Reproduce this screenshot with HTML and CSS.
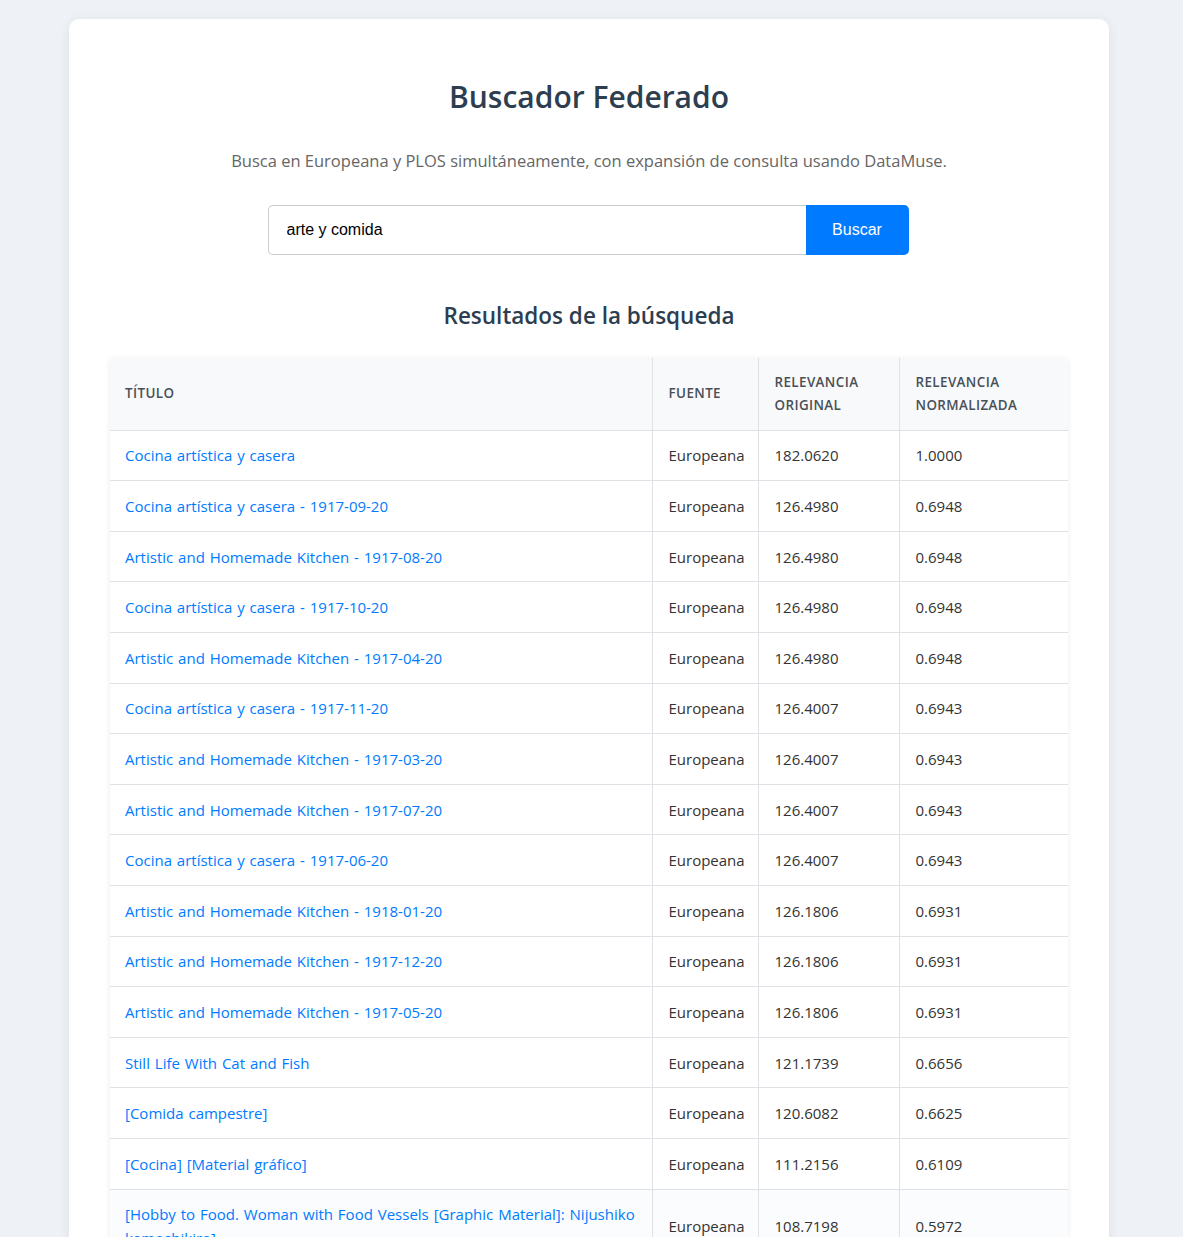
FILE: index.html
```html
<!DOCTYPE html>
<html lang="es">
<head>
<meta charset="utf-8">
<title>Buscador Federado</title>
<link rel="stylesheet" href="styles.css">
</head>
<body>
<main class="card">
  <h1 class="title">Buscador Federado</h1>
  <p class="subtitle">Busca en Europeana y PLOS simultáneamente, con expansión de consulta usando DataMuse.</p>
  <form class="search">
    <input class="search-input" type="text" value="arte y comida">
    <button class="search-btn" type="button">Buscar</button>
  </form>
  <h2 class="results-title">Resultados de la búsqueda</h2>
  <div class="table-wrap">
    <table class="results">
      <colgroup>
        <col class="c-title"><col class="c-src"><col class="c-orig"><col class="c-norm">
      </colgroup>
      <thead>
        <tr><th>Título</th><th>Fuente</th><th>Relevancia Original</th><th>Relevancia Normalizada</th></tr>
      </thead>
      <tbody>
        <tr><td><a href="#">Cocina artística y casera</a></td><td>Europeana</td><td>182.0620</td><td>1.0000</td></tr>
        <tr><td><a href="#">Cocina artística y casera - 1917-09-20</a></td><td>Europeana</td><td>126.4980</td><td>0.6948</td></tr>
        <tr><td><a href="#">Artistic and Homemade Kitchen - 1917-08-20</a></td><td>Europeana</td><td>126.4980</td><td>0.6948</td></tr>
        <tr><td><a href="#">Cocina artística y casera - 1917-10-20</a></td><td>Europeana</td><td>126.4980</td><td>0.6948</td></tr>
        <tr><td><a href="#">Artistic and Homemade Kitchen - 1917-04-20</a></td><td>Europeana</td><td>126.4980</td><td>0.6948</td></tr>
        <tr><td><a href="#">Cocina artística y casera - 1917-11-20</a></td><td>Europeana</td><td>126.4007</td><td>0.6943</td></tr>
        <tr><td><a href="#">Artistic and Homemade Kitchen - 1917-03-20</a></td><td>Europeana</td><td>126.4007</td><td>0.6943</td></tr>
        <tr><td><a href="#">Artistic and Homemade Kitchen - 1917-07-20</a></td><td>Europeana</td><td>126.4007</td><td>0.6943</td></tr>
        <tr><td><a href="#">Cocina artística y casera - 1917-06-20</a></td><td>Europeana</td><td>126.4007</td><td>0.6943</td></tr>
        <tr><td><a href="#">Artistic and Homemade Kitchen - 1918-01-20</a></td><td>Europeana</td><td>126.1806</td><td>0.6931</td></tr>
        <tr><td><a href="#">Artistic and Homemade Kitchen - 1917-12-20</a></td><td>Europeana</td><td>126.1806</td><td>0.6931</td></tr>
        <tr><td><a href="#">Artistic and Homemade Kitchen - 1917-05-20</a></td><td>Europeana</td><td>126.1806</td><td>0.6931</td></tr>
        <tr><td><a href="#">Still Life With Cat and Fish</a></td><td>Europeana</td><td>121.1739</td><td>0.6656</td></tr>
        <tr><td><a href="#">[Comida campestre]</a></td><td>Europeana</td><td>120.6082</td><td>0.6625</td></tr>
        <tr><td><a href="#">[Cocina] [Material gráfico]</a></td><td>Europeana</td><td>111.2156</td><td>0.6109</td></tr>
        <tr class="hover"><td><a href="#">[Hobby to Food. Woman with Food Vessels [Graphic Material]: Nijushiko kamoshikiro]</a></td><td>Europeana</td><td>108.7198</td><td>0.5972</td></tr>
        <tr><td><a href="#">[Cocina] [Material gráfico]</a></td><td>Europeana</td><td>105.0000</td><td>0.5767</td></tr>
      </tbody>
    </table>
  </div>
</main>
</body>
</html>
```

FILE: styles.css
```css
html, body {
  margin: 0;
  padding: 0;
}
body {
  background: #eef1f5;
  font-family: "Open Sans", "Noto Sans", sans-serif;
  color: #333;
  padding: 19px 5px 40px 0;
}
.card {
  max-width: 1040px;
  box-sizing: border-box;
  margin: 0 auto;
  background: #fff;
  border-radius: 10px;
  box-shadow: 0 2px 12px rgba(30, 40, 60, 0.08);
  padding: 40px 41px;
}
.title {
  margin: 19px 0 0;
  text-align: center;
  font-size: 30px;
  line-height: 38px;
  font-weight: 600;
  color: #2c3e50;
}
.subtitle {
  margin: 32px 0 0;
  text-align: center;
  font-size: 16.5px;
  line-height: 26px;
  color: #666;
}
.search {
  display: flex;
  justify-content: center;
  margin: 31px 0 0;
  padding-right: 2px;
}
.search-input {
  width: 538px;
  height: 50px;
  box-sizing: border-box;
  border: 1px solid #ccc;
  border-right: none;
  border-radius: 5px 0 0 5px;
  padding: 0 18px;
  font-family: "Liberation Sans", Arial, sans-serif;
  font-size: 16px;
  color: #000;
  outline: none;
}
.search-btn {
  width: 103px;
  height: 50px;
  border: none;
  border-radius: 0 5px 5px 0;
  background: #007bff;
  color: #fff;
  font-family: "Liberation Sans", Arial, sans-serif;
  font-size: 16px;
  cursor: pointer;
}
.results-title {
  margin: 46px 0 0;
  text-align: center;
  font-size: 22.5px;
  line-height: 30px;
  font-weight: 600;
  color: #2c3e50;
}
.table-wrap {
  margin-top: 27px;
  border-radius: 4px;
  box-shadow: 0 1px 6px rgba(0, 0, 0, 0.08);
  overflow: hidden;
}
.results {
  width: 100%;
  border-collapse: collapse;
  table-layout: fixed;
}
.c-title { width: 542px; }
.c-src { width: 106px; }
.c-orig { width: 141px; }
.c-norm { width: 169px; }
.results th,
.results td {
  border: 1px solid #dee2e6;
  text-align: left;
  vertical-align: middle;
}
.results tr > :first-child { border-left: none; }
.results tr > :last-child { border-right: none; }
.results thead tr th { border-top: none; }
.results th {
  background: #f8f9fa;
  color: #495057;
  font-size: 13.4px;
  font-weight: 600;
  text-transform: uppercase;
  letter-spacing: 0.4px;
  line-height: 23px;
  padding: 12.8px 15px 12.8px 16px;
}
.results th:first-child { padding-left: 15px; }
.results td {
  font-size: 15px;
  line-height: 24px;
  padding: 12.8px 15px 12.8px 16px;
  color: #333;
}
.results td:first-child { padding-left: 15px; }
.results a {
  color: #007bff;
  text-decoration: none;
  word-spacing: 1px;
}
.results tr.hover td {
  background: #fbfcfd;
}
```
